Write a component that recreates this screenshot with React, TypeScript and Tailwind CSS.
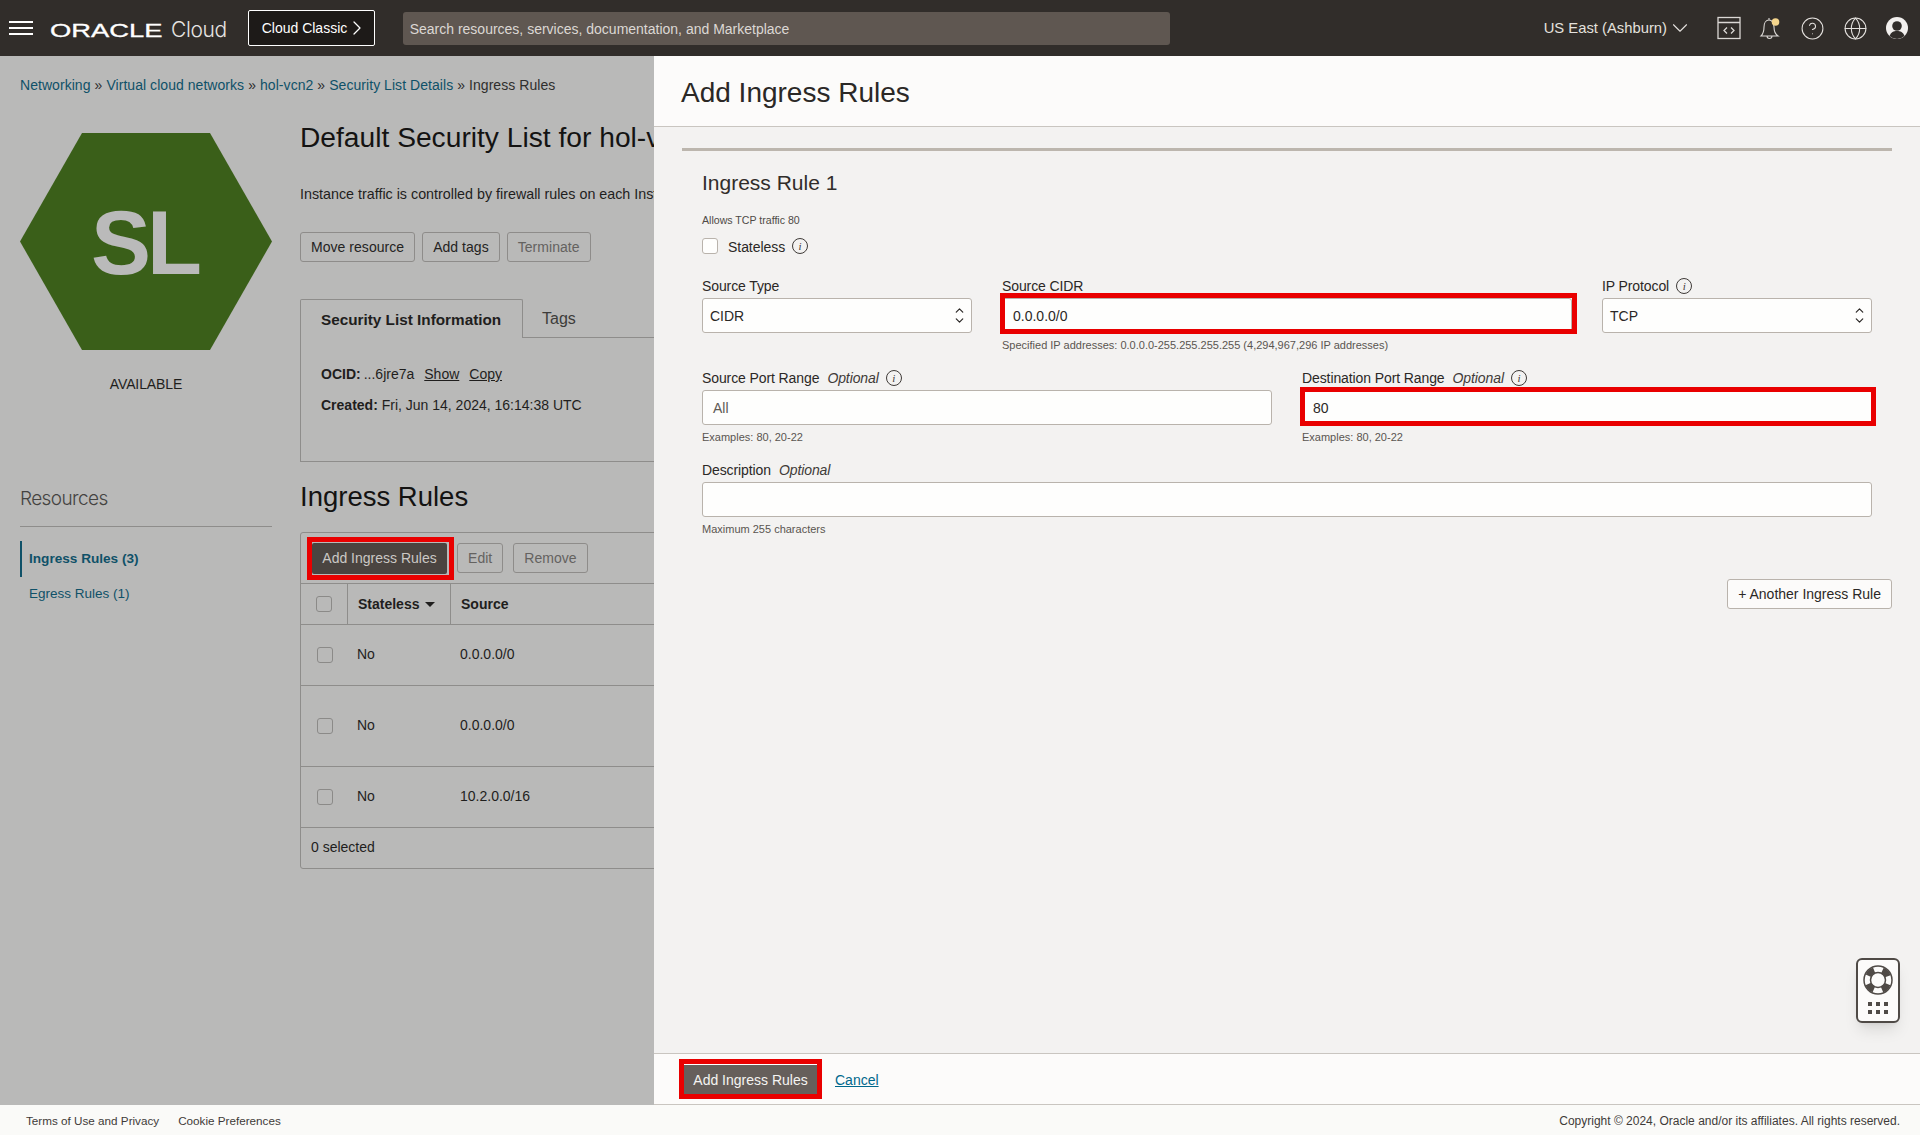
/**
 * Add Ingress Rules panel over the security list details page.
 */
import type { ReactNode } from 'react';
import { ChevronDown, ChevronRight, ChevronUp, CircleHelp, Globe } from 'lucide-react';

function InfoIcon() {
  return (
    <span className="ml-[7px] inline-flex h-[16px] w-[16px] shrink-0 items-center justify-center rounded-full border border-[#3f3b38] font-['Liberation_Serif',serif] text-[11px] italic leading-none text-[#3f3b38]">
      i
    </span>
  );
}

function Label({ text, optional, info }: { text: string; optional?: boolean; info?: boolean }) {
  return (
    <div className="mb-px flex h-[20px] items-center pb-[2px] text-[14px] tracking-[-0.1px] text-[#2b2826]">
      <span>{text}</span>
      {optional && <span className="ml-[8px] italic text-[#3f3b38]">Optional</span>}
      {info && <InfoIcon />}
    </div>
  );
}

function Help({ text }: { text: string }) {
  return <div className="mt-[4px] h-[16px] text-[11px] leading-[16px] text-[#5a5550]">{text}</div>;
}

function SelectBox({ value }: { value: string }) {
  return (
    <div className="flex h-[35px] items-center justify-between rounded-[3px] border border-[#b9b3ac] bg-[#fefefd] pl-[7px] pr-[5px] text-[14px] text-[#2b2826]">
      <span className="pt-[2px]">{value}</span>
      <span className="flex flex-col">
        <ChevronUp size={13} strokeWidth={2.25} className="-mb-[3px]" />
        <ChevronDown size={13} strokeWidth={2.25} />
      </span>
    </div>
  );
}

function TextBox({ children }: { children?: ReactNode }) {
  return (
    <div className="flex h-[35px] items-center rounded-[3px] border border-[#b9b3ac] bg-[#fefefd] pl-[10px] pt-[2px] text-[14px] text-[#2b2826]">
      {children}
    </div>
  );
}

function DimButton({ children, muted }: { children: ReactNode; muted?: boolean }) {
  return (
    <div className={`flex h-[30px] items-center rounded-[3px] border border-[#8e8c8a] px-[10px] text-[14px] tracking-[0.04px] ${muted ? 'text-[#646260]' : 'text-[#242322]'}`}>
      {children}
    </div>
  );
}

function TableRow({ height, source }: { height: string; source: string }) {
  return (
    <div className={`flex items-center border-b border-[#8e8d8b] text-[14px] text-[#1f1e1d] ${height}`}>
      <div className="flex w-[47px] shrink-0 justify-center">
        <span className="h-[16px] w-[16px] rounded-[3px] border border-[#8b8a88]" />
      </div>
      <div className="w-[103px] shrink-0 pb-[2px] pl-[9px]">No</div>
      <div className="pb-[2px] pl-[9px]">{source}</div>
    </div>
  );
}

function TopBar() {
  return (
    <header className="flex h-[56px] shrink-0 items-center bg-[#312d2a] text-white">
      <div className="ml-[9px] flex h-[14px] w-[24px] flex-col justify-between">
        <span className="h-[2px] bg-white" />
        <span className="h-[2px] bg-white" />
        <span className="h-[2px] bg-white" />
      </div>
      <div className="ml-[17px] w-[78px] origin-left scale-x-[1.52] whitespace-nowrap pt-[5px] text-[18px] leading-none [-webkit-text-stroke:0.3px_white]">
        ORACLE
      </div>
      <div className="ml-[43px] pt-[2px] font-['Inter',sans-serif] text-[21px] font-light leading-none tracking-[-0.4px] text-[#e6e4e2]">Cloud</div>
      <div className="ml-[21px] flex h-[36px] w-[127px] items-center rounded-[2px] border border-white bg-[#1d1a18] pl-[13px] text-[14px]">
        <span className="pt-[1px]">Cloud Classic</span>
        <ChevronRight size={24} strokeWidth={1.25} className="-ml-[2px]" />
      </div>
      <div className="ml-[28px] flex h-[33px] w-[767px] items-center rounded-[3px] bg-[#5f5751] pl-[7px] pt-[2px] text-[14px] text-[#dcd8d4]">
        Search resources, services, documentation, and Marketplace
      </div>
      <div className="ml-auto flex items-center text-[#e4e1de]">
        <span className="pt-[1px] text-[14.8px]">US East (Ashburn)</span>
        <ChevronDown size={26} strokeWidth={1} />
        <svg width="24" height="24" viewBox="0 0 24 24" fill="none" stroke="#dbd8d5" strokeWidth="1.3" className="ml-[24px]">
          <rect x="1" y="1.5" width="22" height="21" />
          <path d="M1 6.5h22M10 11.5l-3 3 3 3M14 11.5l3 3-3 3" />
        </svg>
        <svg width="24" height="26" viewBox="0 0 24 26" fill="none" stroke="#dbd8d5" strokeWidth="1.1" className="ml-[17px]">
          <path d="M3 21c2-2 3-4 3-9 0-4 2-7 5-7s5 3 5 7c0 5 1 7 4 9zM11 5V3M9 21a2.500 2.500 0 0 0 5 0" />
          <circle cx="17.500" cy="7" r="3.800" fill="#f4d58d" stroke="none" />
        </svg>
        <CircleHelp size={25} strokeWidth={1} className="ml-[18px]" />
        <Globe size={25} strokeWidth={1} className="ml-[18px]" />
        <svg width="24" height="24" viewBox="0 0 24 24" className="ml-[17px] mr-[11px]">
          <circle cx="12" cy="12" r="11" fill="#f2f0ee" />
          <circle cx="12" cy="10" r="4.800" fill="#312d2a" />
          <path d="M4.500 20c1.500-4 4-5 7.500-5s6 1 7.500 5a11 11 0 0 1-15 0z" fill="#312d2a" />
        </svg>
      </div>
    </header>
  );
}

function DetailsPage() {
  return (
    <div className="w-[654px] shrink-0 overflow-hidden bg-[#b9b9b8] text-[#1f1e1d]">
      <nav className="flex h-[63px] items-start whitespace-nowrap pl-[20px] pt-[19px] text-[14px] leading-[20px] tracking-[0.05px] text-[#0f5168]">
        <span>Networking</span>
        <span className="mx-[4px] text-[#2b2b2b]">»</span>
        <span>Virtual cloud networks</span>
        <span className="mx-[4px] text-[#2b2b2b]">»</span>
        <span>hol-vcn2</span>
        <span className="mx-[4px] text-[#2b2b2b]">»</span>
        <span>Security List Details</span>
        <span className="mx-[4px] text-[#2b2b2b]">»</span>
        <span className="text-[#2f2e2d]">Ingress Rules</span>
      </nav>
      <div className="flex w-[1400px] pl-[20px]">
        {/* Side column */}
        <aside className="w-[252px] shrink-0 pt-[14px]">
          <div className="relative flex h-[217px] items-center justify-center">
            <svg width="252" height="217" viewBox="0 0 252 217" className="block">
              <polygon points="0,108.500 62,0 190,0 252,108.500 190,217 62,217" fill="#3a5f19" />
            </svg>
            <span className="absolute left-[71px] top-[60px] text-[90px] font-bold leading-[100px] tracking-[-4px] text-[#bababa]">SL</span>
          </div>
          <div className="mt-[24px] text-center text-[14px] leading-[20px] tracking-[-0.1px]">AVAILABLE</div>
          <div className="mt-[91px] border-b border-[#8e8d8b] pb-[13px] font-['Inter',sans-serif] text-[19px] font-light leading-[28px] tracking-[-0.6px] text-[#444341]">
            Resources
          </div>
          <div className="mt-[14px] flex h-[36px] items-center border-l-2 border-[#0f5168] pl-[7px] text-[13.6px] font-bold text-[#0f5168]">
            Ingress Rules (3)
          </div>
          <div className="mt-[-1px] flex h-[36px] items-center pl-[9px] text-[13.5px] text-[#0f5168]">Egress Rules (1)</div>
        </aside>

        {/* Main column */}
        <main className="ml-[28px] w-[1000px] shrink-0">
          <h1 className="h-[36px] whitespace-nowrap text-[28.2px] font-normal leading-[36px] text-[#141312]">
            Default Security List for hol-vcn2
          </h1>
          <p className="mt-[29px] h-[19px] whitespace-nowrap text-[14.3px] leading-[20px]">
            Instance traffic is controlled by firewall rules on each Instance
          </p>
          <div className="mt-[29px] flex gap-[7px]">
            <DimButton>Move resource</DimButton>
            <DimButton>Add tags</DimButton>
            <DimButton muted>Terminate</DimButton>
          </div>
          <div className="mt-[37px] flex h-[39px]">
            <div className="flex w-[223px] items-center rounded-t-[2px] border border-b-0 border-[#8e8d8b] pl-[20px] pt-[2px] text-[15.3px] font-bold">
              Security List Information
            </div>
            <div className="flex flex-1 items-center border-b border-[#8e8d8b] pl-[19px] pt-[1px] text-[16px] text-[#3d3c3a]">Tags</div>
          </div>
          <div className="h-[124px] border border-t-0 border-[#8e8d8b] pl-[20px] pt-[26px] text-[14px] leading-[20px]">
            <div className="flex">
              <b>OCID:</b>
              <span className="ml-[3px]">...6jre7a</span>
              <span className="ml-[10px] underline">Show</span>
              <span className="ml-[10px] underline">Copy</span>
            </div>
            <div className="mt-[11px]">
              <b>Created:</b> Fri, Jun 14, 2024, 16:14:38 UTC
            </div>
          </div>
          <h2 className="mt-[17px] h-[36px] text-[27.5px] font-normal leading-[36px] text-[#141312]">Ingress Rules</h2>
          <div className="mt-[17px] rounded-[3px] border border-[#8e8d8b]">
            <div className="flex h-[51px] items-start gap-[10px] border-b border-[#8e8d8b] pl-[11px] pt-[10px]">
              <div className="relative flex h-[31px] w-[135px] items-center justify-center rounded-[2px] bg-[#4a4440] text-[14px] text-[#cbc8c5]">
                Add Ingress Rules
                <span className="absolute -bottom-[6px] -left-[5px] -right-[7px] -top-[6px] border-[5px] border-[#e90000]" />
              </div>
              <DimButton muted>Edit</DimButton>
              <DimButton muted>Remove</DimButton>
            </div>
            <div className="flex h-[41px] items-stretch border-b border-[#8e8d8b] text-[14px] font-bold">
              <div className="flex w-[47px] shrink-0 items-center justify-center border-r border-[#8e8d8b]">
                <span className="h-[16px] w-[16px] rounded-[3px] border border-[#8b8a88]" />
              </div>
              <div className="flex w-[103px] shrink-0 items-center border-r border-[#8e8d8b] pl-[10px]">
                Stateless
                <span className="ml-[6px] h-0 w-0 border-x-[5px] border-t-[5px] border-x-transparent border-t-[#1f1e1d]" />
              </div>
              <div className="flex items-center pl-[10px]">Source</div>
            </div>
            <TableRow height="h-[61px]" source="0.0.0.0/0" />
            <TableRow height="h-[81px]" source="0.0.0.0/0" />
            <TableRow height="h-[61px]" source="10.2.0.0/16" />
            <div className="flex h-[40px] items-center pb-[1px] pl-[10px] text-[14px]">0 selected</div>
          </div>
        </main>
      </div>
    </div>
  );
}

function RulePanel() {
  return (
    <section className="flex min-w-0 flex-1 flex-col bg-[#fcfbfa] text-[#2b2826]">
      <div className="flex h-[71px] shrink-0 items-center border-b border-[#c9c5c0] pl-[27px] pt-[3px] text-[28px] leading-none text-[#2b2826]">
        Add Ingress Rules
      </div>
      <div className="relative flex-1 bg-[#f3f2f1] px-[28px] pt-[21px]">
        <div className="border-t-[3px] border-[#bcb6ae]">
          <div className="px-[20px] pt-[18px]">
            <h3 className="h-[28px] text-[21px] font-normal leading-[28px] text-[#312d2a]">Ingress Rule 1</h3>
            <div className="mt-[15px] h-[16px] text-[10.6px] leading-[16px] text-[#4f4a46]">Allows TCP traffic 80</div>
            <div className="mt-[10px] flex h-[16px] items-center text-[14px]">
              <span className="h-[16px] w-[16px] rounded-[3px] border border-[#b9b3ac] bg-[#fefefd]" />
              <span className="ml-[10px] pt-[2px] tracking-[-0.05px]">Stateless</span>
              <InfoIcon />
            </div>
            <div className="mt-[23px] grid auto-rows-[92px] grid-cols-12 gap-x-[30px]">
              <div className="col-span-3">
                <Label text="Source Type" />
                <SelectBox value="CIDR" />
              </div>
              <div className="col-span-6">
                <Label text="Source CIDR" />
                <div className="relative">
                  <TextBox>0.0.0.0/0</TextBox>
                  <span className="absolute -bottom-[1px] -left-[2px] -right-[5px] -top-[5px] border-[5px] border-[#e90000]" />
                </div>
                <Help text="Specified IP addresses: 0.0.0.0-255.255.255.255 (4,294,967,296 IP addresses)" />
              </div>
              <div className="col-span-3">
                <Label text="IP Protocol" info />
                <SelectBox value="TCP" />
              </div>
              <div className="col-span-6">
                <Label text="Source Port Range" optional info />
                <TextBox>
                  <span className="text-[#5f5a55]">All</span>
                </TextBox>
                <Help text="Examples: 80, 20-22" />
              </div>
              <div className="col-span-6">
                <Label text="Destination Port Range" optional info />
                <div className="relative">
                  <TextBox>80</TextBox>
                  <span className="absolute -bottom-[1px] -left-[2px] -right-[4px] -top-[3px] border-[5px] border-[#e90000]" />
                </div>
                <Help text="Examples: 80, 20-22" />
              </div>
              <div className="col-span-12">
                <Label text="Description" optional />
                <TextBox />
                <Help text="Maximum 255 characters" />
              </div>
            </div>
          </div>
          <div className="mt-[26px] flex justify-end">
            <div className="flex h-[30px] items-center rounded-[3px] border border-[#b9b3ac] bg-[#fcfbfa] px-[10px] text-[14px]">
              + Another Ingress Rule
            </div>
          </div>
        </div>
        {/* Floating help widget */}
        <div className="absolute bottom-[30px] right-[20px] flex h-[65px] w-[44px] flex-col items-center rounded-[6px] border-2 border-[#4f4a46] bg-[#fcfbfa] pt-[5px] shadow-lg">
          <svg width="30" height="30" viewBox="0 0 30 30" fill="none">
            <circle cx="15" cy="15" r="10.500" stroke="#4f4a46" strokeWidth="6" strokeDasharray="8 8.500" strokeDashoffset="-4.200" />
            <circle cx="15" cy="15" r="14" stroke="#4f4a46" strokeWidth="1.500" />
            <circle cx="15" cy="15" r="7.500" stroke="#4f4a46" strokeWidth="1.500" />
          </svg>
          <div className="mt-[7px] grid grid-cols-3 gap-x-[4px] gap-y-[4px]">
            {[0, 1, 2, 3, 4, 5].map((d) => (
              <span key={d} className="h-[4px] w-[4px] bg-[#4f4a46]" />
            ))}
          </div>
        </div>
      </div>
      <div className="flex h-[52px] shrink-0 items-center border-y border-[#c9c5c0] pl-[30px]">
        <div className="flex h-[30px] w-[133px] items-center justify-center border-t border-white bg-[#665f5b] pt-[2px] text-[14px] text-[#f5f4f2] outline-[5px] outline-[#e90000]">
          Add Ingress Rules
        </div>
        <span className="ml-[18px] pt-[2px] text-[14px] text-[#00688c] underline">Cancel</span>
      </div>
    </section>
  );
}

export default function App() {
  return (
    <div className="flex h-screen flex-col overflow-hidden bg-[#fafaf8] font-['Liberation_Sans',Arial,sans-serif]">
      <TopBar />
      <div className="flex min-h-0 flex-1">
        <DetailsPage />
        <RulePanel />
      </div>
      <footer className="flex h-[30px] shrink-0 items-center justify-between px-[26px] pr-[20px] pt-[2px] text-[#3f3b38]">
        <div className="flex gap-[19px] text-[11.7px]">
          <span>Terms of Use and Privacy</span>
          <span>Cookie Preferences</span>
        </div>
        <span className="text-[12px]">Copyright © 2024, Oracle and/or its affiliates. All rights reserved.</span>
      </footer>
    </div>
  );
}
